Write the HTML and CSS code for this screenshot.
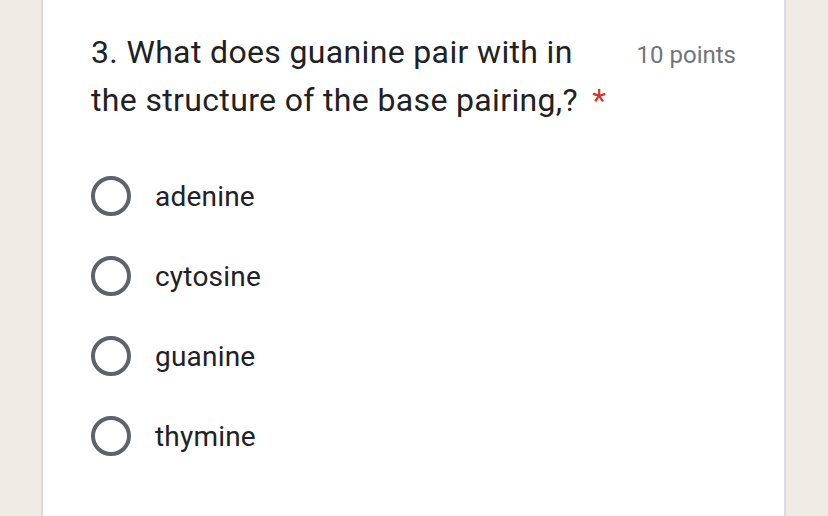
FILE: index.html
```html
<!DOCTYPE html>
<html>
<head>
<meta charset="utf-8">
<link rel="stylesheet" href="styles.css">
</head>
<body>
<div class="card">
  <div class="header">
    <div class="title">3. What does guanine pair with in the structure of the base pairing,? <span class="req">*</span></div>
    <div class="points">10 points</div>
  </div>
  <div class="options">
    <div class="option"><span class="radio"></span><span class="label">adenine</span></div>
    <div class="option"><span class="radio"></span><span class="label">cytosine</span></div>
    <div class="option"><span class="radio"></span><span class="label">guanine</span></div>
    <div class="option"><span class="radio"></span><span class="label">thymine</span></div>
  </div>
</div>
</body>
</html>
```
FILE: styles.css
```css
html, body {
  margin: 0;
  padding: 0;
  background: #f0ebe5;
  height: 100%;
  overflow: hidden;
}
.card {
  margin-left: 41px;
  width: 645px;
  height: 100%;
  background: #fff;
  border-left: 2px solid #dadce0;
  border-right: 2px solid #dadce0;
  padding: 28px 48px 0 48px;
  box-sizing: content-box;
}
.header {
  display: flex;
  justify-content: space-between;
  align-items: baseline;
  gap: 24px;
}
.title {
  flex: 1;
  font-family: Roboto, sans-serif;
  font-size: 32px;
  line-height: 48px;
  letter-spacing: 0.35px;
  color: #202124;
}
.req {
  color: #d93025;
  margin-left: 6px;
}
.points {
  font-family: Roboto, sans-serif;
  font-size: 24px;
  line-height: 48px;
  color: #70757a;
  white-space: nowrap;
}
.options {
  display: flex;
  flex-direction: column;
  margin-top: 32px;
}
.option {
  display: flex;
  align-items: center;
  height: 80px;
}
.radio {
  width: 32px;
  height: 32px;
  border: 4px solid #5f6368;
  border-radius: 50%;
  flex: none;
}
.label {
  margin-left: 24px;
  font-family: Roboto, sans-serif;
  font-size: 28px;
  letter-spacing: 0.2px;
  color: #202124;
}
```
